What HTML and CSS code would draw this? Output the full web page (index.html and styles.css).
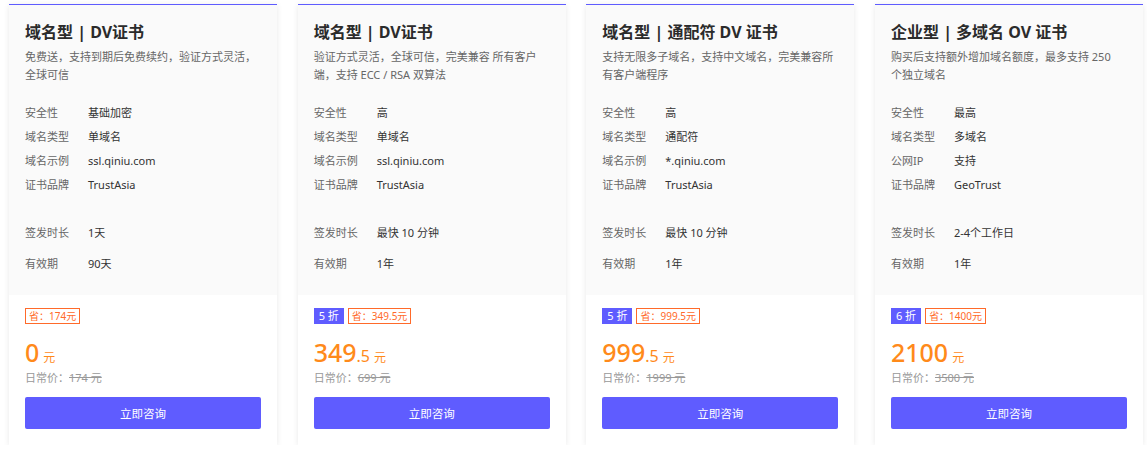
FILE: index.html
```html
<!DOCTYPE html>
<html lang="zh-CN">
<head>
<meta charset="utf-8">
<title>SSL 证书</title>
<link rel="stylesheet" href="styles.css">
</head>
<body>
<div class="cards">
  <div class="card">
    <div class="card-top">
      <h3 class="title">域名型 | DV证书</h3>
      <p class="desc">免费送，支持到期后免费续约，验证方式灵活，全球可信</p>
      <dl class="specs">
        <div class="row"><dt>安全性</dt><dd>基础加密</dd></div>
        <div class="row"><dt>域名类型</dt><dd>单域名</dd></div>
        <div class="row"><dt>域名示例</dt><dd>ssl.qiniu.com</dd></div>
        <div class="row"><dt>证书品牌</dt><dd>TrustAsia</dd></div>
      </dl>
      <dl class="specs specs-2">
        <div class="row"><dt>签发时长</dt><dd>1天</dd></div>
        <div class="row"><dt>有效期</dt><dd>90天</dd></div>
      </dl>
    </div>
    <div class="card-bottom">
      <div class="tags"><span class="tag-save">省：174元</span></div>
      <div class="price"><span class="int">0</span><span class="unit">元</span></div>
      <div class="orig">日常价：<s>174 元</s></div>
      <button class="btn">立即咨询</button>
    </div>
  </div>

  <div class="card">
    <div class="card-top">
      <h3 class="title">域名型 | DV证书</h3>
      <p class="desc">验证方式灵活，全球可信，完美兼容 所有客户端，支持 ECC / RSA 双算法</p>
      <dl class="specs">
        <div class="row"><dt>安全性</dt><dd>高</dd></div>
        <div class="row"><dt>域名类型</dt><dd>单域名</dd></div>
        <div class="row"><dt>域名示例</dt><dd>ssl.qiniu.com</dd></div>
        <div class="row"><dt>证书品牌</dt><dd>TrustAsia</dd></div>
      </dl>
      <dl class="specs specs-2">
        <div class="row"><dt>签发时长</dt><dd>最快 10 分钟</dd></div>
        <div class="row"><dt>有效期</dt><dd>1年</dd></div>
      </dl>
    </div>
    <div class="card-bottom">
      <div class="tags"><span class="tag-off">5 折</span><span class="tag-save">省：349.5元</span></div>
      <div class="price"><span class="int">349</span><span class="dec">.5</span><span class="unit">元</span></div>
      <div class="orig">日常价：<s>699 元</s></div>
      <button class="btn">立即咨询</button>
    </div>
  </div>

  <div class="card">
    <div class="card-top">
      <h3 class="title">域名型 | 通配符 DV 证书</h3>
      <p class="desc">支持无限多子域名，支持中文域名，完美兼容所有客户端程序</p>
      <dl class="specs">
        <div class="row"><dt>安全性</dt><dd>高</dd></div>
        <div class="row"><dt>域名类型</dt><dd>通配符</dd></div>
        <div class="row"><dt>域名示例</dt><dd>*.qiniu.com</dd></div>
        <div class="row"><dt>证书品牌</dt><dd>TrustAsia</dd></div>
      </dl>
      <dl class="specs specs-2">
        <div class="row"><dt>签发时长</dt><dd>最快 10 分钟</dd></div>
        <div class="row"><dt>有效期</dt><dd>1年</dd></div>
      </dl>
    </div>
    <div class="card-bottom">
      <div class="tags"><span class="tag-off">5 折</span><span class="tag-save">省：999.5元</span></div>
      <div class="price"><span class="int">999</span><span class="dec">.5</span><span class="unit">元</span></div>
      <div class="orig">日常价：<s>1999 元</s></div>
      <button class="btn">立即咨询</button>
    </div>
  </div>

  <div class="card">
    <div class="card-top">
      <h3 class="title">企业型 | 多域名 OV 证书</h3>
      <p class="desc">购买后支持额外增加域名额度，最多支持 250 <br>个独立域名</p>
      <dl class="specs">
        <div class="row"><dt>安全性</dt><dd>最高</dd></div>
        <div class="row"><dt>域名类型</dt><dd>多域名</dd></div>
        <div class="row"><dt>公网IP</dt><dd>支持</dd></div>
        <div class="row"><dt>证书品牌</dt><dd>GeoTrust</dd></div>
      </dl>
      <dl class="specs specs-2">
        <div class="row"><dt>签发时长</dt><dd>2-4个工作日</dd></div>
        <div class="row"><dt>有效期</dt><dd>1年</dd></div>
      </dl>
    </div>
    <div class="card-bottom">
      <div class="tags"><span class="tag-off">6 折</span><span class="tag-save">省：1400元</span></div>
      <div class="price"><span class="int">2100</span><span class="unit">元</span></div>
      <div class="orig">日常价：<s>3500 元</s></div>
      <button class="btn">立即咨询</button>
    </div>
  </div>
</div>
</body>
</html>
```

FILE: styles.css
```css
* { box-sizing: border-box; }
html, body {
  margin: 0;
  padding: 0;
  background: #ffffff;
}
body {
  font-family: "Noto Sans", "Noto Sans CJK SC", sans-serif;
  color: #333;
}
.cards {
  display: grid;
  grid-template-columns: repeat(4, 268px);
  column-gap: 20.67px;
  padding: 4px 0 0 9px;
}
.card {
  border-top: 1px solid #5f5cff;
  background: #fff;
  box-shadow: 0 1px 6px rgba(0, 0, 0, 0.09);
  height: 441px;
  display: flex;
  flex-direction: column;
}
.card-top {
  background: #fafafa;
  padding: 15px 16px 0 16px;
  height: 290px;
}
.title {
  margin: 0;
  font-size: 16px;
  line-height: 24px;
  font-weight: 700;
  color: #2b2b2b;
}
.desc {
  margin: 4px 0 0 0;
  font-size: 11px;
  line-height: 18px;
  color: #666;
  padding-right: 4px;
}
.specs {
  margin: 16px 0 0 0;
  font-size: 11px;
}
.row {
  display: flex;
  height: 24px;
  align-items: center;
}
.specs-2 { margin-top: 20.5px; }
.specs-2 .row { height: 31px; }
dt {
  width: 63px;
  flex: none;
  color: #666;
}
dd {
  margin: 0;
  color: #333;
}
.card-bottom {
  flex: 1;
  padding: 13px 16px 16px 16px;
  display: flex;
  flex-direction: column;
}
.tags {
  display: flex;
  gap: 4px;
  height: 16px;
}
.tag-off {
  background: #5f5cff;
  color: #fff;
  font-size: 11px;
  line-height: 16px;
  padding: 0 5px;
}
.tag-save {
  border: 1px solid #ff6a2a;
  color: #ff6a2a;
  font-size: 10px;
  line-height: 14px;
  padding: 0 3px;
}
.price {
  margin-top: 12px;
  height: 32px;
  display: flex;
  align-items: baseline;
  color: #ff8a1a;
  line-height: 32px;
}
.price .int {
  font-size: 25px;
  font-weight: 500;
}
.price .dec {
  font-size: 16px;
}
.price .unit {
  font-size: 12px;
  margin-left: 4px;
}
.orig {
  margin-top: 1px;
  font-size: 11px;
  line-height: 18px;
  color: #999;
}
.orig s { color: #999; }
.btn {
  margin-top: 10px;
  height: 32px;
  border: 0;
  border-radius: 2px;
  background: #5f5cff;
  color: #fff;
  font-family: inherit;
  font-size: 11.5px;
  cursor: pointer;
}
```
